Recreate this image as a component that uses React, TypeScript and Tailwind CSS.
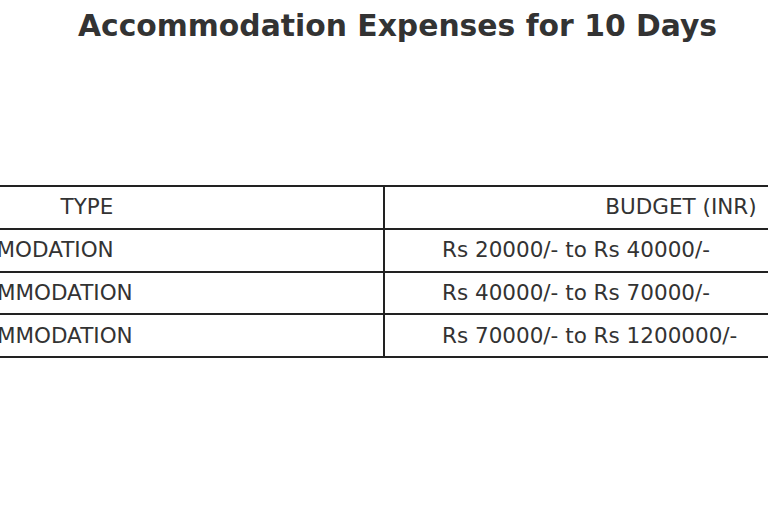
const rows = [
  { type: "BUDGET ACCOMODATION", budget: "Rs 20000/- to Rs 40000/-", pad: "pl-[47px]" },
  { type: "LUXURY ACCOMMODATION", budget: "Rs 40000/- to Rs 70000/-", pad: "pl-[54px]" },
  { type: "LUXURY ACCOMMODATION", budget: "Rs 70000/- to Rs 1200000/-", pad: "pl-[54px]" },
];

export default function App() {
  return (
    <div
      className="h-[512px] w-[768px] overflow-hidden bg-white text-[#333]"
      style={{ fontFamily: '"DejaVu Sans", sans-serif' }}
    >
      <h1 className="pt-[6px] pl-[27px] text-center text-[29.8px] font-bold leading-[40px]">
        Accommodation Expenses for 10 Days
      </h1>

      <div className="mt-[139px] flex justify-center">
        <table className="w-[1190px] shrink-0 border-collapse text-[21.5px]">
          <thead>
            <tr className="h-[42.75px]">
              <th className="w-1/2 border-2 border-[#222] text-center font-normal">TYPE</th>
              <th className="w-1/2 border-2 border-[#222] text-center font-normal">BUDGET (INR)</th>
            </tr>
          </thead>
          <tbody>
            {rows.map((r, i) => (
              <tr key={i} className="h-[42.75px]">
                <td className={`border-2 border-[#222] ${r.pad}`}>{r.type}</td>
                <td className="border-2 border-[#222] pl-[57px]">{r.budget}</td>
              </tr>
            ))}
          </tbody>
        </table>
      </div>
    </div>
  );
}
